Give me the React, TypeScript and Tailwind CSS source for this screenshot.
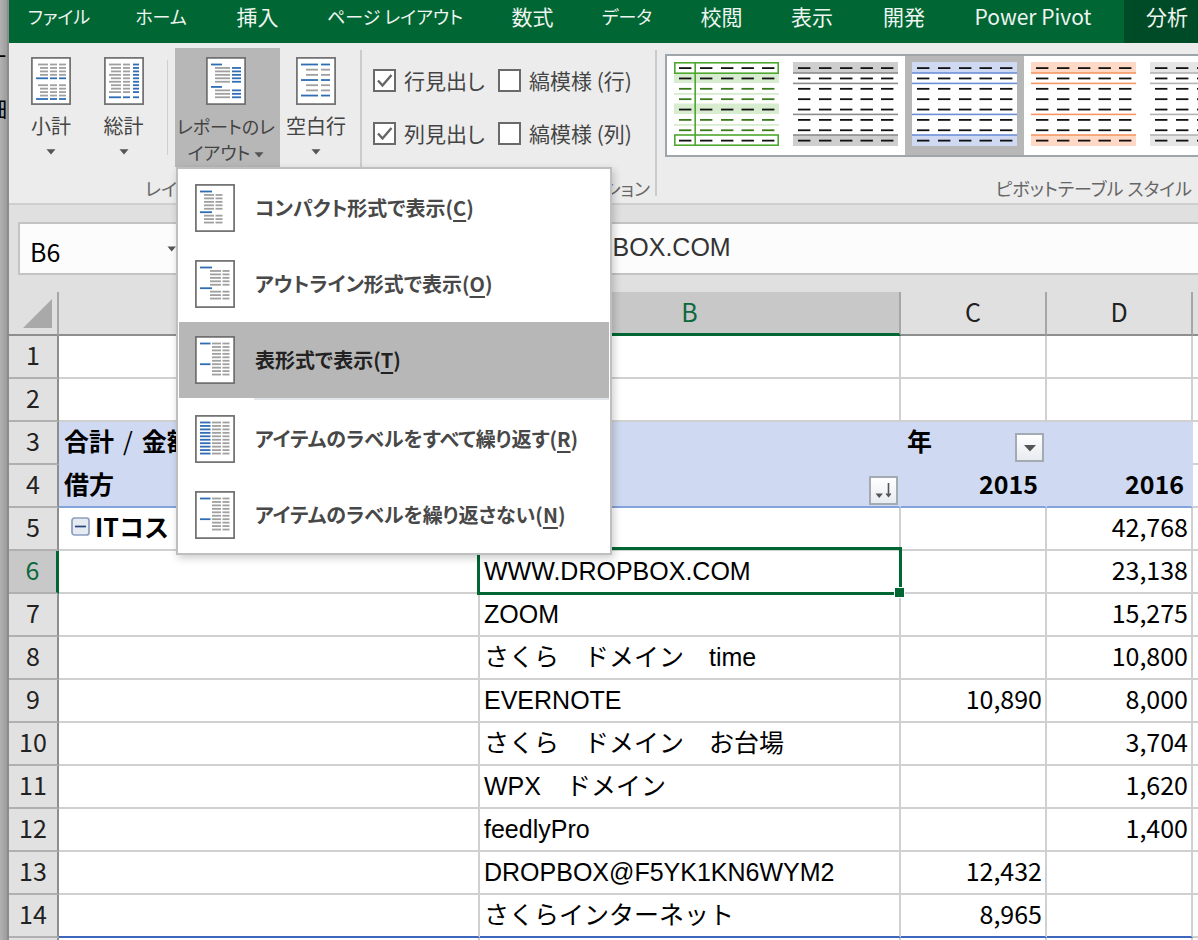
import { useState, type ReactNode } from "react";

type Line = [x1: number, x2: number, y: number, blue?: boolean];

const BLUE = "#2f6eb5";
const GRAY = "#a0a0a0";

const rowY = (i: number) => 7.5 + i * 3.45;

const repeatRows = (rows: number[], cols: [number, number, boolean?][]): Line[] =>
  rows.flatMap((r) => cols.map(([a, b, blue]): Line => [a, b, rowY(r), blue]));

const subtotalLines: Line[] = [
  ...repeatRows([0, 6], [[7, 17], [19, 26], [28, 35]]),
  ...repeatRows([1, 2, 3, 7, 8, 9], [[9, 17], [19, 26], [28, 35]]),
  ...repeatRows([4, 10], [[5, 17, true], [19, 26, true], [28, 35, true]]),
];
const grandTotalLines: Line[] = [
  ...repeatRows([0, 3, 5, 8], [[5, 17], [19, 26], [29, 35, true]]),
  ...repeatRows([1, 2, 4, 6, 7], [[7, 17], [19, 26], [29, 35, true]]),
  ...repeatRows([9.5], [[5, 17, true], [19, 26, true], [29, 35, true]]),
];
const reportLines: Line[] = [
  ...repeatRows([0, 6.5], [[5, 16, true]]),
  ...repeatRows([1, 2, 3, 4, 5, 7.5, 8.5, 9.5], [[9, 24], [26, 35, true]]),
];
const blankRowLines: Line[] = [
  ...repeatRows([0, 4.5, 9], [[5, 22, true], [25, 34, true]]),
  ...repeatRows([1.5, 3, 6, 7.5], [[10, 22], [25, 34]]),
];
const compactLines: Line[] = [
  ...repeatRows([0, 6], [[5, 17, true]]),
  ...repeatRows([1, 2, 3, 4, 5, 7, 8, 9], [[9, 19], [20.5, 27.5]]),
];
const outlineLines: Line[] = [
  ...repeatRows([0, 6], [[5, 17, true]]),
  ...repeatRows([1, 2, 3, 4, 5, 7, 8, 9], [[15, 26], [27.5, 34.5]]),
];
const allRows = [0, 1, 2, 3, 4, 5, 6, 7, 8, 9];
const tabularLines: Line[] = [
  ...repeatRows([0, 6], [[5, 15.5, true]]),
  ...repeatRows(allRows, [[17, 26], [27.5, 34.5]]),
];
const repeatLines: Line[] = repeatRows(allRows, [[5, 15.5, true], [17, 26], [27.5, 34.5]]);

function PageIcon({ lines }: { lines: Line[] }) {
  return (
    <svg viewBox="0 0 40 48" className="block h-12 w-10 shrink-0" aria-hidden="true">
      <rect x="0.9" y="0.9" width="38.2" height="46.2" fill="#fff" stroke="#6e6e6e" strokeWidth="1.7" />
      {lines.map(([x1, x2, y, blue], i) => (
        <rect key={i} x={x1} y={y - 0.9} width={x2 - x1} height="1.8" fill={blue ? BLUE : GRAY} />
      ))}
    </svg>
  );
}

function Arrow() {
  return (
    <svg viewBox="0 0 10 6" className="inline-block h-[6px] w-[10px]" aria-hidden="true">
      <path d="M0.5 0.3h9L5 5.6z" fill="#555" />
    </svg>
  );
}

const dashRows = [0, 1, 2, 3, 4, 5, 6, 7];
const dashCols = [5, 26, 47, 67.5, 88];

function StyleThumb({ band, line, green }: { band: string; line: string; green?: boolean }) {
  return (
    <svg viewBox="0 0 105 84" className="block h-[84px] w-[105px]" aria-hidden="true">
      <rect width="105" height="84" fill="#fff" />
      {green ? (
        <>
          <rect y="11" width="105" height="10" fill={band} />
          <rect y="41.5" width="105" height="10.5" fill={band} />
          <rect y="31" width="105" height="1.8" fill={band} />
          <rect y="62" width="105" height="1.8" fill={band} />
          <rect x="0.8" y="0.8" width="103.4" height="10.4" fill="#fff" stroke={line} strokeWidth="1.6" />
          <rect x="0.8" y="73" width="103.4" height="10.2" fill="#fff" stroke={line} strokeWidth="1.6" />
          <path d="M21.2 0v84" stroke={line} strokeWidth="1.6" />
        </>
      ) : (
        <>
          <rect width="105" height="11" fill={band} />
          <rect y="73" width="105" height="11" fill={band} />
          {[11, 21.4, 52.4, 73].map((y) => (
            <rect key={y} y={y - 0.8} width="105" height="1.6" fill={line} />
          ))}
        </>
      )}
      {dashRows.map((r) =>
        dashCols.map((x) => (
          <rect
            key={`${r}-${x}`}
            x={x}
            y={5.2 + r * 10.36}
            width="12.4"
            height="1.8"
            fill={green && [2, 3, 5, 6].includes(r) ? "#3c7a1e" : "#111"}
          />
        )),
      )}
    </svg>
  );
}

const thumbs = [
  { name: "緑", band: "#d8edcf", line: "#4ea72e", green: true },
  { name: "灰色", band: "#cecece", line: "#8c8c8c" },
  { name: "青", band: "#cfd9f1", line: "#6c8fd6", selected: true },
  { name: "オレンジ", band: "#ffd9c6", line: "#f79863" },
  { name: "淡い灰色", band: "#e6e6e6", line: "#b4b4b4" },
];

const tabs = [
  { label: "ファイル", style: "w-[100px] text-[18px]" },
  { label: "ホーム", style: "w-[104px] text-[18px]" },
  { label: "挿入", style: "w-[89px] text-[21px]" },
  { label: "ページ レイアウト", style: "w-[186px] text-[18px]" },
  { label: "数式", style: "w-[89px] text-[21px]" },
  { label: "データ", style: "w-[100px] text-[18px]" },
  { label: "校閲", style: "w-[89px] text-[21px]" },
  { label: "表示", style: "w-[92px] text-[21px]" },
  { label: "開発", style: "w-[92px] text-[21px]" },
  { label: "Power Pivot", style: "w-[174px] pr-2 text-[21px]" },
];

function RibbonButton({ lines, label }: { lines: Line[]; label: string }) {
  return (
    <button className="flex flex-col items-center whitespace-nowrap pt-[9px]">
      <PageIcon lines={lines} />
      <span className="mt-2 leading-[26px]">{label}</span>
      <span className="leading-[20px]">
        <Arrow />
      </span>
    </button>
  );
}

function Check({ label, initial }: { label: string; initial: boolean }) {
  const [on, setOn] = useState(initial);
  return (
    <label className="flex items-center gap-2 whitespace-nowrap text-[21px]">
      <span className="grid">
        <input
          type="checkbox"
          checked={on}
          onChange={() => setOn(!on)}
          className="col-start-1 row-start-1 size-[23px] appearance-none border-2 border-[#6a6a6a] bg-white"
        />
        {on && (
          <svg viewBox="0 0 23 23" className="pointer-events-none col-start-1 row-start-1 size-[23px]" aria-hidden="true">
            <path d="M5 11.5l4.5 5L18.5 6" fill="none" stroke="#666" strokeWidth="2.4" />
          </svg>
        )}
      </span>
      {label}
    </label>
  );
}

const menuItems = [
  { text: "コンパクト形式で表示", hotkey: "C", lines: compactLines },
  { text: "アウトライン形式で表示", hotkey: "O", lines: outlineLines },
  { text: "表形式で表示", hotkey: "T", lines: tabularLines, active: true },
  { text: "アイテムのラベルをすべて繰り返す", hotkey: "R", lines: repeatLines },
  { text: "アイテムのラベルを繰り返さない", hotkey: "N", lines: tabularLines },
];

function LayoutMenu() {
  return (
    <div
      role="menu"
      className="absolute left-px top-full z-20 w-[436px] border-2 border-[#bfbfbf] bg-white px-px pt-px shadow-[2px_3px_8px_rgba(0,0,0,0.2)]"
    >
      {menuItems.map((m) => (
        <div key={m.hotkey}>
          <button
            role="menuitem"
            className={
              m.active
                ? "flex h-[76px] w-full items-center bg-[#b7b7b7] pl-4 text-left font-bold text-[#222]"
                : "flex h-[76px] w-full items-center pl-4 text-left font-bold text-[#484848]"
            }
          >
            <PageIcon lines={m.lines} />
            <span className="ml-5 whitespace-nowrap">
              {m.text}(<span className="underline underline-offset-4">{m.hotkey}</span>)
            </span>
          </button>
          {m.active && <div className="mb-px ml-[75px] h-[2px] bg-[#e2e5ea]" />}
        </div>
      ))}
    </div>
  );
}

function Ribbon() {
  return (
    <div className="flex h-[162px] border-b-2 border-[#cfcfcf] bg-[#ececec] text-[20px] text-[#444] [font-feature-settings:'palt']">
      <section className="flex w-[351px] shrink-0 flex-col pt-[5px]">
        <div className="flex h-[119px]">
          <div className="flex w-[84px] justify-center">
            <RibbonButton lines={subtotalLines} label="小計" />
          </div>
          <div className="flex w-[61px] justify-center">
            <RibbonButton lines={grandTotalLines} label="総計" />
          </div>
          <div className="ml-[13px] mt-3 h-[95px] w-px bg-[#cfcfcf]" />
          <div className="relative ml-[7px] w-[105px]">
            <button className="flex h-full w-full flex-col items-center whitespace-nowrap bg-[#b7b7b7] pr-[3px] pt-[9px]">
              <PageIcon lines={reportLines} />
              <span className="mt-2 text-[18px] leading-[26px]">
                レポートのレ
                <br />
                イアウト <Arrow />
              </span>
            </button>
            <LayoutMenu />
          </div>
          <div className="flex flex-1 justify-center pr-2">
            <RibbonButton lines={blankRowLines} label="空白行" />
          </div>
        </div>
        <p className="mt-[6px] text-center text-[18px] leading-[30px] text-[#666]">レイアウト</p>
      </section>
      <section className="flex w-[297px] shrink-0 flex-col pt-[7px]">
        <div className="border-x-2 border-[#cbcbcb]">
          <div className="grid auto-rows-[53px] grid-cols-[125px_1fr] items-center pl-[11px] pt-1">
            <Check label="行見出し" initial={true} />
            <Check label="縞模様 (行)" initial={false} />
            <Check label="列見出し" initial={true} />
            <Check label="縞模様 (列)" initial={false} />
          </div>
          <p className="mt-5 whitespace-nowrap pr-[5px] text-right text-[18px] leading-[16px] text-[#666]">
            ピボットテーブル スタイル オプション
          </p>
        </div>
      </section>
      <section className="flex min-w-0 flex-1 flex-col pl-2 pt-[11px]">
        <div className="flex shrink-0 overflow-hidden border-2 border-r-0 border-[#9fa6ab] bg-white">
          {thumbs.map((t) => (
            <button
              key={t.name}
              aria-label={t.name}
              className={
                t.selected
                  ? "flex h-[99px] w-[119px] shrink-0 justify-center bg-[#b7b7b7] pt-[6px]"
                  : "flex h-[99px] w-[119px] shrink-0 justify-center pt-[6px]"
              }
            >
              <StyleThumb band={t.band} line={t.line} green={t.green} />
            </button>
          ))}
        </div>
        <p className="mt-4 whitespace-nowrap pr-[6px] text-right text-[18px] leading-[30px] text-[#666]">
          ピボットテーブル スタイル
        </p>
      </section>
    </div>
  );
}

type Row = { b?: string; c?: string; d?: string };
const rows: Row[] = [
  {},
  {},
  {},
  { c: "2015", d: "2016" },
  { d: "42,768" },
  { b: "WWW.DROPBOX.COM", d: "23,138" },
  { b: "ZOOM", d: "15,275" },
  { b: "さくら　ドメイン　time", d: "10,800" },
  { b: "EVERNOTE", c: "10,890", d: "8,000" },
  { b: "さくら　ドメイン　お台場", d: "3,704" },
  { b: "WPX　ドメイン", d: "1,620" },
  { b: "feedlyPro", d: "1,400" },
  { b: "DROPBOX@F5YK1KN6WYM2", c: "12,432" },
  { b: "さくらインターネット", c: "8,965" },
];

function FilterButton({ sorted }: { sorted?: boolean }) {
  return (
    <button
      aria-label={sorted ? "並べ替え" : "フィルター"}
      className="absolute bottom-px right-px grid size-[29px] place-items-center border-2 border-[#a3abb2] bg-linear-to-b from-white to-[#e8ebf0]"
    >
      <svg viewBox="0 0 25 25" className="size-[25px]" aria-hidden="true">
        {sorted ? (
          <>
            <path d="M4.5 15.5h7.4l-3.7 4.4z" fill="#555" />
            <path d="M17.5 5v13M15.3 15.5l2.2 2.7 2.2-2.7" fill="none" stroke="#555" strokeWidth="1.6" />
          </>
        ) : (
          <path d="M7 10h12l-6 6.5z" fill="#555" />
        )}
      </svg>
    </button>
  );
}

const plain = "border-b-2 border-r-2 border-[#d0d0d0] bg-white";
const pivotTop = "border-b-2 border-r-2 border-[#cfd9f1] bg-[#cfd9f1]";
const pivotBottom = "border-b-2 border-r-2 border-b-[#84a2dd] border-r-[#cfd9f1] bg-[#cfd9f1]";
const lastData = "border-b-2 border-r-2 border-b-[#3f66bd] border-r-[#d0d0d0] bg-white";
const latin = "font-['Liberation_Sans','Noto_Sans_CJK_JP',sans-serif]";

function cellClass(n: number) {
  if (n === 3) return pivotTop;
  if (n === 4) return pivotBottom;
  if (n === 14) return lastData;
  return plain;
}

function labelCell(n: number): ReactNode {
  if (n === 3)
    return (
      <span className="flex gap-[9px] pl-[5px] font-bold">
        <span>合計</span>
        <span className="font-normal">/</span>
        <span>金額</span>
      </span>
    );
  if (n === 4) return <span className="pl-[5px] font-bold">借方</span>;
  if (n === 5)
    return (
      <span className="flex items-center gap-[5px] pl-3 font-bold">
        <button aria-label="折りたたむ" className="block">
          <svg viewBox="0 0 19 19" className="block size-[19px]" aria-hidden="true">
            <rect x="1" y="1" width="17" height="17" rx="2.5" fill="#e6eaf1" stroke="#8a9dc0" strokeWidth="1.7" />
            <path d="M4 9.5h11" stroke="#26437c" strokeWidth="1.7" />
          </svg>
        </button>
        ITコスト
      </span>
    );
  return null;
}

function Sheet() {
  const head = "border-b-2 border-r-2 border-b-[#8e8e8e] border-r-[#a6a6a6] pb-1 font-normal text-[#222]";
  return (
    <table className="w-full table-fixed border-separate border-spacing-0 text-[25px] leading-[37px] text-black">
      <colgroup>
        <col className="w-[50px]" />
        <col className="w-[421px]" />
        <col className="w-[421px]" />
        <col className="w-[146px]" />
        <col className="w-[146px]" />
        <col />
      </colgroup>
      <thead>
        <tr className="h-[44px]">
          <th className="border-b-2 border-r-2 border-b-[#8e8e8e] border-r-[#a6a6a6]">
            <svg viewBox="0 0 48 42" className="block h-[42px] w-12" aria-label="すべて選択">
              <path d="M43 7v29H14z" fill="#a9a9a9" />
            </svg>
          </th>
          <th className={head}>A</th>
          <th className="border-b-[3px] border-r-2 border-b-[#006633] border-r-[#a6a6a6] bg-[#c8c8c8] pb-[3px] font-normal text-[#0b6a3c]">B</th>
          <th className={head}>C</th>
          <th className={head}>D</th>
          <th className="border-b-2 border-[#8e8e8e]" />
        </tr>
      </thead>
      <tbody>
        {rows.map((r, i) => {
          const n = i + 1;
          const cell = cellClass(n);
          const selected = n === 6;
          const numPad = n === 4 ? "pr-[7px] font-bold" : "pr-[3px]";
          return (
            <tr key={n} className="h-[43px]">
              <th
                className={
                  selected
                    ? "border-b-2 border-r-[3px] border-b-[#b0b0b0] border-r-[#006633] bg-[#c8c8c8] pb-1 font-normal text-[#0b6a3c]"
                    : "border-b-2 border-r-2 border-b-[#b0b0b0] border-r-[#8e8e8e] bg-[#e1e1e1] pb-1 font-normal text-[#222]"
                }
              >
                {n}
              </th>
              <td className={`${cell} whitespace-nowrap pb-1`}>{labelCell(n)}</td>
              <td className={`${cell} ${latin} relative whitespace-nowrap pl-1`}>
                {r.b}
                {n === 4 && <FilterButton sorted />}
                {selected && (
                  <span className="pointer-events-none absolute -bottom-[3px] -left-[3px] -right-[3px] -top-[4px] z-10 border-[3px] border-[#006633]">
                    <span className="absolute -bottom-[6px] -right-[6px] size-[11px] border border-white bg-[#006633]" />
                  </span>
                )}
              </td>
              <td className={`${cell} relative pb-1 text-right ${numPad}`}>
                {n === 3 ? <span className="block pl-[6px] text-left font-bold">年</span> : r.c}
                {n === 3 && <FilterButton />}
              </td>
              <td className={`${cell} pb-1 text-right ${numPad}`}>{r.d}</td>
              <td className="border-b-2 border-[#d0d0d0] bg-white" />
            </tr>
          );
        })}
        <tr className="h-[43px]">
          <th className="border-r-2 border-[#8e8e8e] bg-[#e1e1e1]" />
          <td className="border-r-2 border-[#d0d0d0] bg-white" />
          <td className="border-r-2 border-[#d0d0d0] bg-white" />
          <td className="border-r-2 border-[#d0d0d0] bg-white" />
          <td className="border-r-2 border-[#d0d0d0] bg-white" />
          <td className="bg-white" />
        </tr>
      </tbody>
    </table>
  );
}

export default function App() {
  return (
    <div className="flex h-screen overflow-hidden bg-[#e0e0e0] font-['Noto_Sans_CJK_JP','Noto_Sans',sans-serif]">
      <aside className="flex w-[9px] shrink-0 flex-col items-end overflow-hidden border-r-2 border-[#8c8c8c] bg-linear-to-r from-[#b2b2b2] to-[#9c9c9c] pt-[42px] text-[22px] leading-[30px] text-black">
        <span>ナ</span>
        <span className="mt-5">細</span>
      </aside>
      <main className="flex min-w-0 flex-1 flex-col">
        <nav className="flex h-[43px] shrink-0 bg-[#006633] leading-[33px] text-[#eef5f0] [font-feature-settings:'palt']">
          {tabs.map((t) => (
            <button key={t.label} className={`${t.style} shrink-0 whitespace-nowrap pb-[10px]`}>
              {t.label}
            </button>
          ))}
          <button className="min-w-[88px] flex-1 whitespace-nowrap bg-[#004b27] pb-[10px] pl-[22px] text-left text-[21px]">
            分析
          </button>
        </nav>
        <Ribbon />
        <div className="flex shrink-0 pb-[17px] pl-[9px] pt-[17px] text-[25px]">
          <div className="flex h-[53px] w-[172px] items-center border-2 border-[#c3c3c3] bg-[#fcfcfc] pr-3">
            <input
              aria-label="名前ボックス"
              defaultValue="B6"
              className="w-full min-w-0 bg-transparent pl-[10px] pt-[6px] text-black outline-none"
            />
            <Arrow />
          </div>
          <input
            aria-label="数式バー"
            defaultValue="WWW.DROPBOX.COM"
            className="ml-[260px] h-[53px] min-w-0 flex-1 border-2 border-r-0 border-[#c3c3c3] bg-[#fcfcfc] pb-[2px] pl-3 font-['Liberation_Sans','Noto_Sans_CJK_JP',sans-serif] text-[#333] outline-none"
          />
        </div>
        <Sheet />
      </main>
    </div>
  );
}
